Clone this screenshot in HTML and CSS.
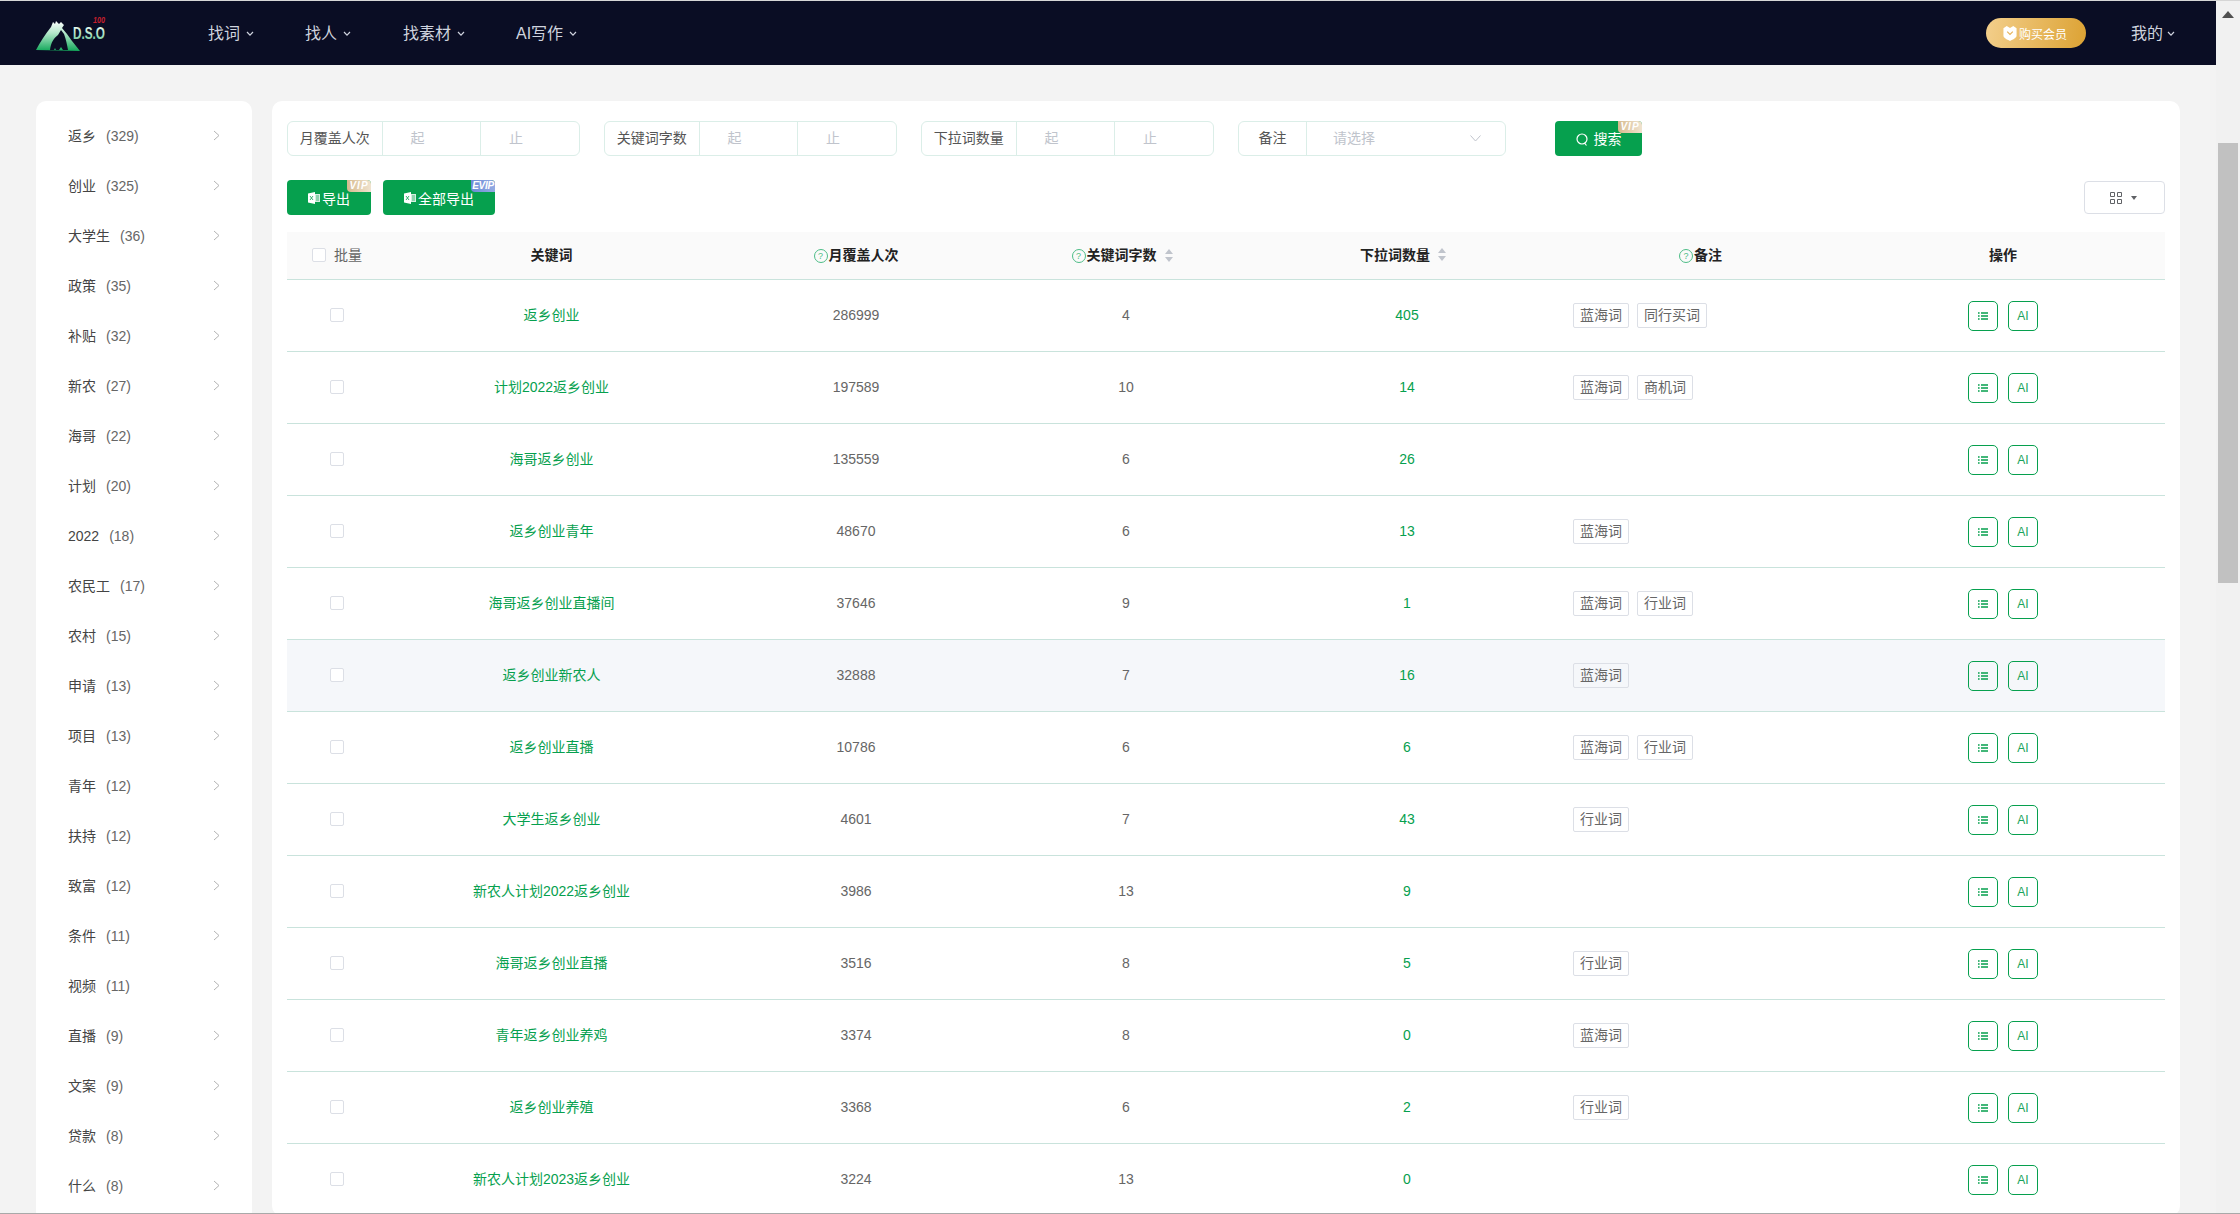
FILE: index.html
```html
<!DOCTYPE html>
<html lang="zh-CN">
<head>
<meta charset="utf-8">
<title>D.S.O 关键词</title>
<link rel="stylesheet" href="styles.css">
</head>
<body>
<svg class="defs" aria-hidden="true">
  <defs>
    <linearGradient id="mt" x1="0" y1="0" x2="0" y2="1"><stop offset="0" stop-color="#ffffff"/><stop offset=".4" stop-color="#b5e8cb"/><stop offset="1" stop-color="#12a85a"/></linearGradient>
    <linearGradient id="dso" x1="0" y1="0" x2="0" y2="1"><stop offset="0" stop-color="#ffffff"/><stop offset="1" stop-color="#62c893"/></linearGradient>
    <symbol id="chev" viewBox="0 0 7 11"><path d="M1 1l5 4.500L1 10" fill="none" stroke="#b4b4b4" stroke-width="1"/></symbol>
    <symbol id="down" viewBox="0 0 8 6"><path d="M1 1l3 3.200L7 1" fill="none" stroke="#cfd3de" stroke-width="1.200"/></symbol>
    <symbol id="excel" viewBox="0 0 12 12"><path d="M0 1.500L7 0v12L0 10.500z" fill="#fff"/><path d="M7 2h5v8H7z" fill="#d5efe0"/><path d="M8 4h3M8 6h3M8 8h3" stroke="#06a04e" stroke-width=".7"/><path d="M2 4l3 4M5 4L2 8" stroke="#06a04e" stroke-width=".8"/></symbol>
    <symbol id="list" viewBox="0 0 10 8"><path d="M3 1h7M3 4h7M3 7h7" stroke="#06a04e" stroke-width="1.300"/><path d="M0 1h1.600M0 4h1.600M0 7h1.600" stroke="#06a04e" stroke-width="1.300"/></symbol>
  </defs>
</svg>
<div class="page">
  <div class="view">
    <header class="topbar">
      <a class="logo" aria-label="D.S.O">
        <svg width="72" height="36" viewBox="0 0 72 36">
          <path d="M0 35C4 27 9 20 15 12l2-5 2 2 1-3 3 3 2-2 3 3-2 3 5 6 5 7 8 10z" fill="url(#mt)"/>
          <path d="M14 35c1-8 4-12 8-15l3-5 3 4c2 5 3 11 4 16h-5l-2-3-2 3h-3l-1-2-1 2z" fill="#0a0d24"/>
          <text class="logo-dso" x="37" y="24" textLength="32" lengthAdjust="spacingAndGlyphs">D.S.O</text>
          <text class="logo-100" x="57" y="8" textLength="12" lengthAdjust="spacingAndGlyphs">100</text>
        </svg>
      </a>
      <nav class="nav">
        <span class="nav-item nav-a">找词<svg class="down"><use href="#down"/></svg></span>
        <span class="nav-item nav-b">找人<svg class="down"><use href="#down"/></svg></span>
        <span class="nav-item nav-c">找素材<svg class="down"><use href="#down"/></svg></span>
        <span class="nav-item">AI写作<svg class="down"><use href="#down"/></svg></span>
      </nav>
      <a class="buy">
        <svg class="buy-icon" viewBox="0 0 16 16"><path d="M1 2.500L4.500 0 8 2 11.500 0 15 2.500v8c0 2-3.500 4-7 5.500-3.500-1.500-7-3.500-7-5.500z" fill="#fff"/><path d="M5 6l3 3 3-3" fill="none" stroke="#e6b45c" stroke-width="1.300"/></svg>购买会员
      </a>
      <span class="nav-item mine">我的<svg class="down"><use href="#down"/></svg></span>
    </header>

    <div class="content">
      <aside class="side">
        <a class="side-item"><span>返乡</span><span class="cnt">(329)</span><svg class="chev"><use href="#chev"/></svg></a>
        <a class="side-item"><span>创业</span><span class="cnt">(325)</span><svg class="chev"><use href="#chev"/></svg></a>
        <a class="side-item"><span>大学生</span><span class="cnt">(36)</span><svg class="chev"><use href="#chev"/></svg></a>
        <a class="side-item"><span>政策</span><span class="cnt">(35)</span><svg class="chev"><use href="#chev"/></svg></a>
        <a class="side-item"><span>补贴</span><span class="cnt">(32)</span><svg class="chev"><use href="#chev"/></svg></a>
        <a class="side-item"><span>新农</span><span class="cnt">(27)</span><svg class="chev"><use href="#chev"/></svg></a>
        <a class="side-item"><span>海哥</span><span class="cnt">(22)</span><svg class="chev"><use href="#chev"/></svg></a>
        <a class="side-item"><span>计划</span><span class="cnt">(20)</span><svg class="chev"><use href="#chev"/></svg></a>
        <a class="side-item"><span>2022</span><span class="cnt">(18)</span><svg class="chev"><use href="#chev"/></svg></a>
        <a class="side-item"><span>农民工</span><span class="cnt">(17)</span><svg class="chev"><use href="#chev"/></svg></a>
        <a class="side-item"><span>农村</span><span class="cnt">(15)</span><svg class="chev"><use href="#chev"/></svg></a>
        <a class="side-item"><span>申请</span><span class="cnt">(13)</span><svg class="chev"><use href="#chev"/></svg></a>
        <a class="side-item"><span>项目</span><span class="cnt">(13)</span><svg class="chev"><use href="#chev"/></svg></a>
        <a class="side-item"><span>青年</span><span class="cnt">(12)</span><svg class="chev"><use href="#chev"/></svg></a>
        <a class="side-item"><span>扶持</span><span class="cnt">(12)</span><svg class="chev"><use href="#chev"/></svg></a>
        <a class="side-item"><span>致富</span><span class="cnt">(12)</span><svg class="chev"><use href="#chev"/></svg></a>
        <a class="side-item"><span>条件</span><span class="cnt">(11)</span><svg class="chev"><use href="#chev"/></svg></a>
        <a class="side-item"><span>视频</span><span class="cnt">(11)</span><svg class="chev"><use href="#chev"/></svg></a>
        <a class="side-item"><span>直播</span><span class="cnt">(9)</span><svg class="chev"><use href="#chev"/></svg></a>
        <a class="side-item"><span>文案</span><span class="cnt">(9)</span><svg class="chev"><use href="#chev"/></svg></a>
        <a class="side-item"><span>贷款</span><span class="cnt">(8)</span><svg class="chev"><use href="#chev"/></svg></a>
        <a class="side-item"><span>什么</span><span class="cnt">(8)</span><svg class="chev"><use href="#chev"/></svg></a>
      </aside>

      <main class="card">
        <div class="filters">
          <div class="fgroup range"><span class="flabel">月覆盖人次</span><span class="fcell">起</span><span class="fcell">止</span></div>
          <div class="fgroup range"><span class="flabel">关键词字数</span><span class="fcell">起</span><span class="fcell">止</span></div>
          <div class="fgroup range"><span class="flabel">下拉词数量</span><span class="fcell">起</span><span class="fcell">止</span></div>
          <div class="fgroup pick"><span class="flabel short">备注</span><span class="fcell select">请选择<svg class="sel-arrow" viewBox="0 0 11 7"><path d="M.5.500l5 5.500 5-5.500" fill="none" stroke="#c0c4cc"/></svg></span></div>
          <button class="btn search">
            <svg class="q" viewBox="0 0 12 13"><circle cx="6" cy="6" r="5" fill="none" stroke="#fff" stroke-width="1.200"/><path d="M8.500 10l2 2.500" stroke="#fff" stroke-width="1.200"/></svg>搜索
            <i class="badge vip">VIP</i>
          </button>
        </div>

        <div class="tools">
          <button class="btn exp"><svg class="xl"><use href="#excel"/></svg>导出<i class="badge vip">VIP</i></button>
          <button class="btn exp-all"><svg class="xl"><use href="#excel"/></svg>全部导出<i class="badge evip">EVIP</i></button>
          <button class="viewbtn">
            <svg class="grid-ic" viewBox="0 0 12 12"><path d="M.5.500h4v4h-4zM7.500.500h4v4h-4zM.5 7.500h4v4h-4zM7.500 7.500h4v4h-4z" fill="none" stroke="#606266"/></svg>
            <svg class="caret" viewBox="0 0 6 4"><path d="M0 0h6L3 4z" fill="#606266"/></svg>
          </button>
        </div>

        <table class="tbl">
          <colgroup><col class="c1"><col class="c2"><col class="c3"><col class="c4"><col class="c5"><col class="c6"><col class="c7"></colgroup>
          <thead>
            <tr>
              <th class="batch"><span class="th-in"><span class="check"></span><span class="batch-t">批量</span></span></th>
              <th>关键词</th>
              <th><span class="th-in"><span class="help">?</span>月覆盖人次</span></th>
              <th><span class="th-in"><span class="help">?</span>关键词字数<svg class="sort" viewBox="0 0 10 13"><path d="M5 0l4 5H1zM5 13L1 8h8z" fill="#c0c4cc"/></svg></span></th>
              <th><span class="th-in">下拉词数量<svg class="sort" viewBox="0 0 10 13"><path d="M5 0l4 5H1zM5 13L1 8h8z" fill="#c0c4cc"/></svg></span></th>
              <th class="note"><span class="th-in"><span class="help">?</span>备注</span></th>
              <th>操作</th>
            </tr>
          </thead>
          <tbody>
            <tr><td><span class="check"></span></td><td class="kw">返乡创业</td><td>286999</td><td>4</td><td class="num">405</td><td class="tags"><span class="tag">蓝海词</span><span class="tag">同行买词</span></td><td class="act"><span class="ops"><a class="op"><svg class="list"><use href="#list"/></svg></a><a class="op">AI</a></span></td></tr>
            <tr><td><span class="check"></span></td><td class="kw">计划2022返乡创业</td><td>197589</td><td>10</td><td class="num">14</td><td class="tags"><span class="tag">蓝海词</span><span class="tag">商机词</span></td><td class="act"><span class="ops"><a class="op"><svg class="list"><use href="#list"/></svg></a><a class="op">AI</a></span></td></tr>
            <tr><td><span class="check"></span></td><td class="kw">海哥返乡创业</td><td>135559</td><td>6</td><td class="num">26</td><td class="tags"></td><td class="act"><span class="ops"><a class="op"><svg class="list"><use href="#list"/></svg></a><a class="op">AI</a></span></td></tr>
            <tr><td><span class="check"></span></td><td class="kw">返乡创业青年</td><td>48670</td><td>6</td><td class="num">13</td><td class="tags"><span class="tag">蓝海词</span></td><td class="act"><span class="ops"><a class="op"><svg class="list"><use href="#list"/></svg></a><a class="op">AI</a></span></td></tr>
            <tr><td><span class="check"></span></td><td class="kw">海哥返乡创业直播间</td><td>37646</td><td>9</td><td class="num">1</td><td class="tags"><span class="tag">蓝海词</span><span class="tag">行业词</span></td><td class="act"><span class="ops"><a class="op"><svg class="list"><use href="#list"/></svg></a><a class="op">AI</a></span></td></tr>
            <tr class="hover"><td><span class="check"></span></td><td class="kw">返乡创业新农人</td><td>32888</td><td>7</td><td class="num">16</td><td class="tags"><span class="tag">蓝海词</span></td><td class="act"><span class="ops"><a class="op"><svg class="list"><use href="#list"/></svg></a><a class="op">AI</a></span></td></tr>
            <tr><td><span class="check"></span></td><td class="kw">返乡创业直播</td><td>10786</td><td>6</td><td class="num">6</td><td class="tags"><span class="tag">蓝海词</span><span class="tag">行业词</span></td><td class="act"><span class="ops"><a class="op"><svg class="list"><use href="#list"/></svg></a><a class="op">AI</a></span></td></tr>
            <tr><td><span class="check"></span></td><td class="kw">大学生返乡创业</td><td>4601</td><td>7</td><td class="num">43</td><td class="tags"><span class="tag">行业词</span></td><td class="act"><span class="ops"><a class="op"><svg class="list"><use href="#list"/></svg></a><a class="op">AI</a></span></td></tr>
            <tr><td><span class="check"></span></td><td class="kw">新农人计划2022返乡创业</td><td>3986</td><td>13</td><td class="num">9</td><td class="tags"></td><td class="act"><span class="ops"><a class="op"><svg class="list"><use href="#list"/></svg></a><a class="op">AI</a></span></td></tr>
            <tr><td><span class="check"></span></td><td class="kw">海哥返乡创业直播</td><td>3516</td><td>8</td><td class="num">5</td><td class="tags"><span class="tag">行业词</span></td><td class="act"><span class="ops"><a class="op"><svg class="list"><use href="#list"/></svg></a><a class="op">AI</a></span></td></tr>
            <tr><td><span class="check"></span></td><td class="kw">青年返乡创业养鸡</td><td>3374</td><td>8</td><td class="num">0</td><td class="tags"><span class="tag">蓝海词</span></td><td class="act"><span class="ops"><a class="op"><svg class="list"><use href="#list"/></svg></a><a class="op">AI</a></span></td></tr>
            <tr><td><span class="check"></span></td><td class="kw">返乡创业养殖</td><td>3368</td><td>6</td><td class="num">2</td><td class="tags"><span class="tag">行业词</span></td><td class="act"><span class="ops"><a class="op"><svg class="list"><use href="#list"/></svg></a><a class="op">AI</a></span></td></tr>
            <tr><td><span class="check"></span></td><td class="kw">新农人计划2023返乡创业</td><td>3224</td><td>13</td><td class="num">0</td><td class="tags"></td><td class="act"><span class="ops"><a class="op"><svg class="list"><use href="#list"/></svg></a><a class="op">AI</a></span></td></tr>
          </tbody>
        </table>
      </main>
    </div>
  </div>

  <div class="scrollbar">
    <svg class="sb-up" viewBox="0 0 12 7"><path d="M6 0l6 7H0z" fill="#505050"/></svg>
    <div class="sb-thumb"></div>
  </div>
</div>
</body>
</html>
```
FILE: styles.css
```css
* { box-sizing: border-box; }
html, body { margin: 0; height: 100%; overflow: hidden; }
body {
  height: 1214px;
  border-top: 1px solid #d6d6d6;
  border-bottom: 1px solid #a9a9a9;
  background: #f3f3f3;
  font-family: "Liberation Sans", "Noto Sans CJK SC", sans-serif;
  font-size: 14px;
  color: #666;
}
.defs { display: block; width: 0; height: 0; overflow: hidden; }
.page { display: flex; height: 100%; overflow: hidden; }
.view { flex: 1; min-width: 0; overflow: hidden; }

/* top bar */
.topbar {
  height: 64px;
  background: #0a0d24;
  display: flex;
  align-items: center;
  padding-left: 36px;
  color: #cfd3de;
}
.logo { width: 72px; height: 36px; display: block; margin-top: -1px; flex: none; }
.logo svg { display: block; overflow: visible; }
.logo-dso { font: bold 17px "Liberation Sans", sans-serif; fill: url(#dso); }
.logo-100 { font: italic bold 9px "Liberation Sans", sans-serif; fill: #c8202e; }
.nav { display: flex; margin-left: 100px; padding-top: 2px; }
.nav-item { font-size: 16px; line-height: 24px; display: inline-flex; align-items: center; white-space: nowrap; }
.nav-a { width: 97px; }
.nav-b { width: 98px; }
.nav-c { width: 113px; }
.down { width: 8px; height: 6px; margin-left: 6px; }
.buy {
  margin-left: auto;
  width: 100px;
  height: 30px;
  border-radius: 15px;
  background: linear-gradient(100deg, #f3cf8c, #dca233);
  display: flex;
  align-items: center;
  padding-left: 16px;
  color: #fff;
  font-size: 12px;
  white-space: nowrap;
}
.buy-icon { width: 16px; height: 15px; margin-right: 1px; }
.mine { margin-left: 45px; margin-right: 41px; padding-top: 2px; }
.mine .down { margin-left: 4px; }

/* layout */
.content { display: flex; gap: 20px; padding: 36px 36px 0; align-items: flex-start; }
.side {
  width: 216px;
  flex: none;
  background: #fff;
  border-radius: 10px;
  padding: 10px 0 10px 32px;
}
.side-item { height: 50px; display: flex; align-items: center; color: #444; line-height: 20px; white-space: nowrap; }
.cnt { margin-left: 10px; color: #666; }
.chev { width: 7px; height: 11px; margin-left: auto; margin-right: 32px; margin-top: -2px; }

.card {
  flex: 1;
  min-width: 0;
  background: #fff;
  border-radius: 10px;
  padding: 20px 15px 0;
}

/* filters */
.filters { display: flex; gap: 24.5px; height: 35px; }
.fgroup {
  height: 35px;
  border: 1px solid #dbeee8;
  border-radius: 6px;
  display: flex;
  align-items: stretch;
  line-height: 33px;
}
.range { width: 292.5px; }
.pick { width: 268px; }
.flabel { width: 94.5px; flex: none; text-align: center; color: #555; border-right: 1px solid #dbeee8; white-space: nowrap; }
.short { width: 68px; }
.fcell { flex: 1; color: #c0c4cc; padding-left: 28px; }
.fcell + .fcell { border-left: 1px solid #dbeee8; }
.select { display: flex; align-items: center; justify-content: space-between; padding: 0 24px 0 26px; }
.sel-arrow { width: 11px; height: 7px; }

/* buttons */
.btn {
  position: relative;
  height: 35px;
  border: 0;
  border-radius: 4px;
  background: #06a04e;
  color: #fff;
  font: inherit;
  padding: 0;
  display: inline-flex;
  align-items: center;
  justify-content: center;
  line-height: 20px;
}
.search { width: 87px; margin-left: 24.5px; gap: 6px; padding-top: 1px; }
.q { width: 12px; height: 13px; }
.exp { width: 84px; padding-top: 3px; }
.exp-all { width: 112px; padding-top: 3px; }
.xl { width: 12px; height: 12px; margin-right: 2px; margin-top: -3px; }
.badge {
  position: absolute;
  top: 0;
  right: 0;
  width: 24px;
  height: 12px;
  border-radius: 0 4px 0 4px;
  font: italic bold 10px/12px "Liberation Sans", sans-serif;
  letter-spacing: 1px;
  text-align: center;
  color: #fff;
}
.vip { background: linear-gradient(90deg, #d6bb8f, #f0e3cf); }
.evip { background: linear-gradient(90deg, #6c8cd6, #93abe3); letter-spacing: -.3px; }

.tools { display: flex; align-items: center; gap: 12px; height: 35px; margin: 24px 0 17px; }
.viewbtn {
  margin-left: auto;
  width: 81px;
  height: 33px;
  background: #fff;
  border: 1px solid #dcdfe6;
  border-radius: 4px;
  padding: 0 2px 0 0;
  display: flex;
  align-items: center;
  justify-content: center;
  gap: 9px;
}
.grid-ic { width: 12px; height: 12px; }
.caret { width: 6px; height: 4px; }

/* table */
.tbl { width: 1878px; table-layout: fixed; border-collapse: separate; border-spacing: 0; }
.c1 { width: 100px; }
.c2 { width: 329px; }
.c3 { width: 280px; }
.c4 { width: 260px; }
.c5 { width: 302px; }
.c6 { width: 283px; }
.c7 { width: 324px; }
.tbl th {
  height: 48px;
  background: #fafafa;
  border-bottom: 1px solid #c9e3dc;
  color: #222;
  font-weight: bold;
  text-align: center;
  padding: 0 0 2px;
  line-height: 20px;
  white-space: nowrap;
}
.tbl th.note { padding-left: 2px; }
.tbl th.batch { text-align: left; padding: 0 0 0 25px; font-weight: normal; color: #666; }
.th-in { display: inline-flex; align-items: center; }
.batch-t { margin-left: 8px; }
.tbl td {
  height: 72px;
  border-bottom: 1px solid #c9e3dc;
  text-align: center;
  padding: 0 0 2px;
  color: #666;
  line-height: 20px;
  white-space: nowrap;
}
.tbl td.act { padding-bottom: 0; }
.tbl td.kw, .tbl td.num { color: #06a04e; }
.tbl td.tags { text-align: left; padding: 0 0 0 15px; }
.hover td { background: #f5f7fa; }
.check {
  display: inline-block;
  width: 14px;
  height: 14px;
  background: #fff;
  border: 1px solid #dcdfe6;
  border-radius: 2px;
  vertical-align: middle;
}
td > .check { margin-bottom: 2px; }
.help {
  display: block;
  width: 14px;
  height: 14px;
  margin: 2px 1px 0 0;
  border: 1px solid #4dbd87;
  border-radius: 50%;
  color: #4dbd87;
  font: 9px/12px "Liberation Sans", sans-serif;
  text-align: center;
}
.sort { width: 10px; height: 13px; margin: 0 7px; }
.tag {
  display: inline-block;
  height: 25px;
  line-height: 23px;
  padding: 0 6px;
  margin-right: 8px;
  border: 1px solid #dcdfe6;
  border-radius: 2px;
  color: #666;
  vertical-align: middle;
}
.ops { display: inline-flex; gap: 10px; vertical-align: middle; }
.op {
  width: 30px;
  height: 30px;
  border: 1px solid #06a04e;
  border-radius: 5px;
  display: flex;
  align-items: center;
  justify-content: center;
  color: #1aa45c;
  font-size: 12px;
}
.list { width: 10px; height: 8px; }

/* scrollbar */
.scrollbar { width: 24px; flex: none; background: #f1f1f1; padding-left: 2px; }
.sb-up { display: block; width: 12px; height: 7px; margin: 10px 0 0 4px; }
.sb-thumb { width: 20px; height: 440px; margin-top: 125px; background: #c1c1c1; }
```
